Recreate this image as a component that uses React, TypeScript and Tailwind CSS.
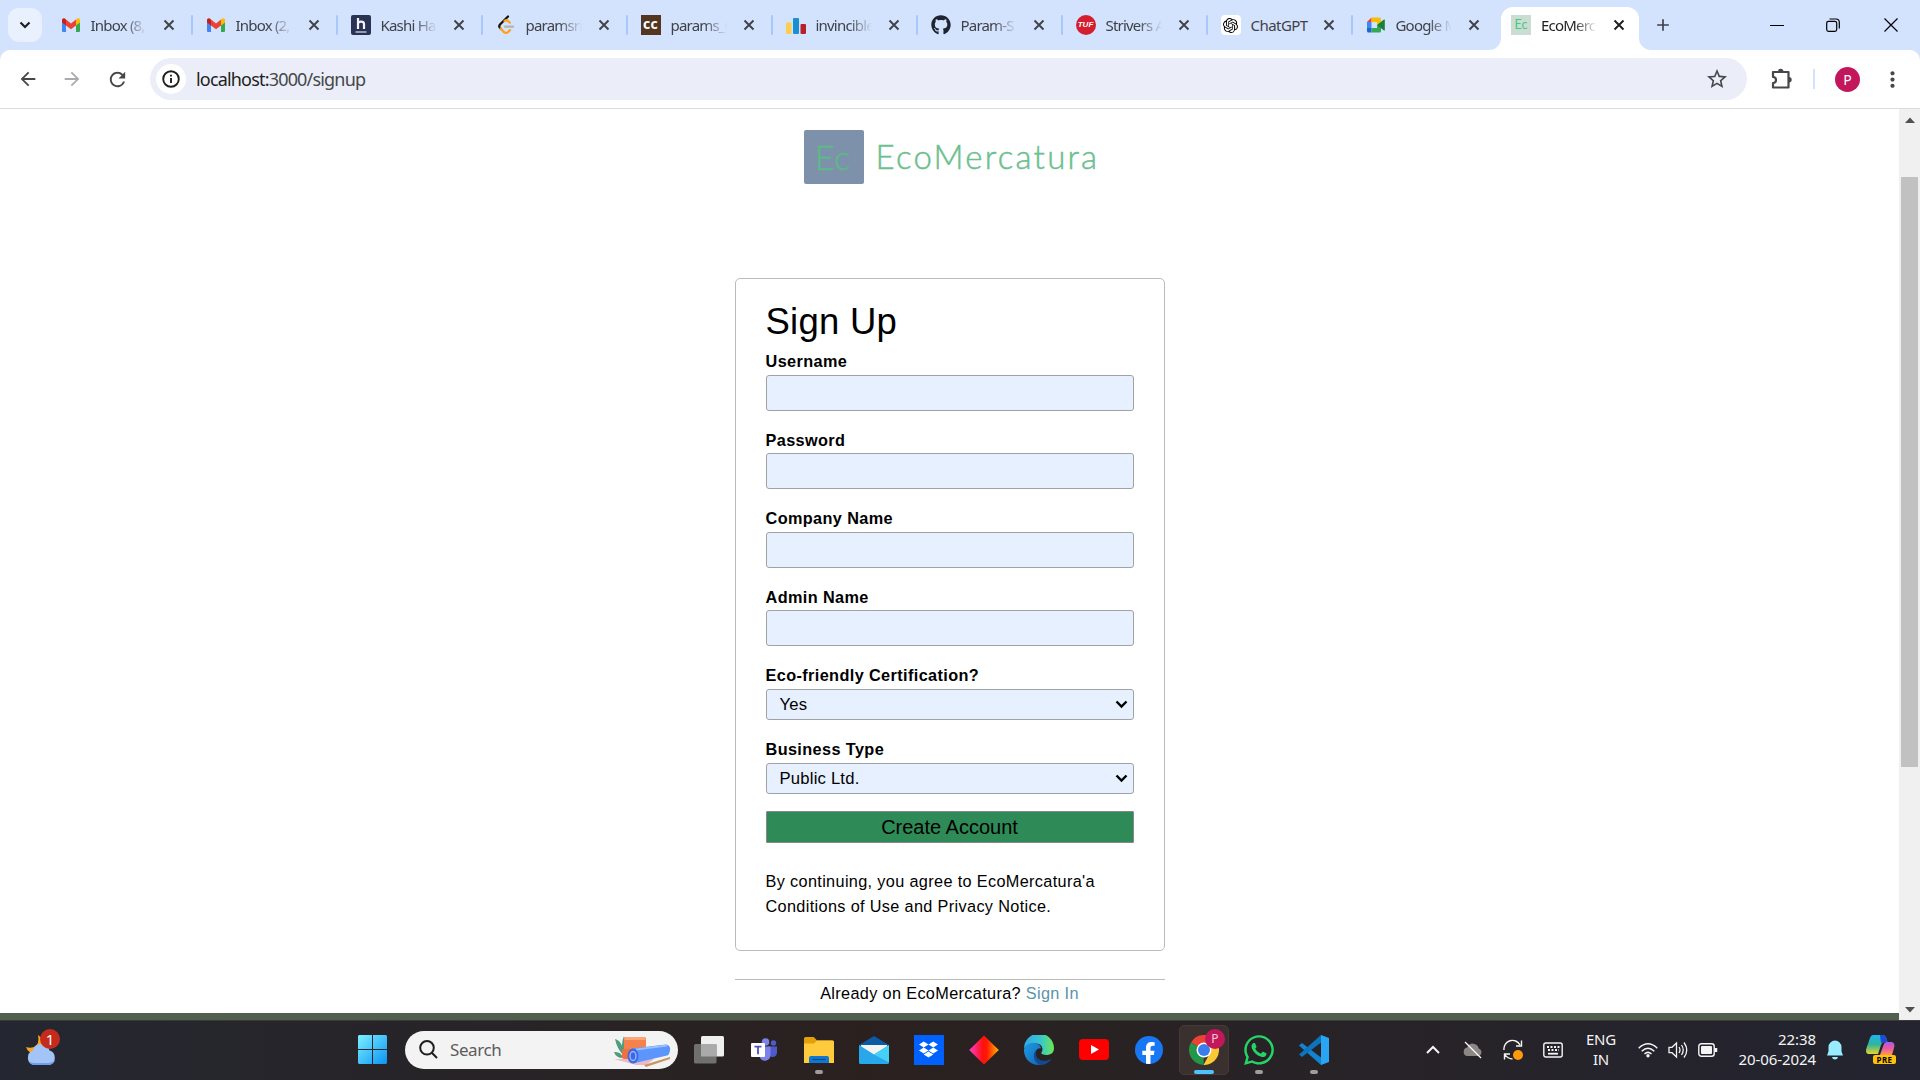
import React from "react";
import { FaGithub, FaDropbox, FaWhatsapp, FaFacebookF } from "react-icons/fa";
import { SiOpenai } from "react-icons/si";
import { MdArrowBack, MdArrowForward, MdRefresh, MdStarBorder, MdMoreVert, MdAdd } from "react-icons/md";

type Kids = { children?: React.ReactNode };

const Gmail = () => (
  <svg viewBox="0 0 20 20" className="size-5">
    <path d="M1 5v11a1 1 0 0 0 1 1h3V8z" fill="#4285f4" />
    <path d="M19 5v11a1 1 0 0 1-1 1h-3V8z" fill="#34a853" />
    <path d="M15 4.6l1.2-1C17.400 2.700 19 3.500 19 5v2.500l-4 3z" fill="#fbbc04" />
    <path d="M5 4.600l5 3.800 5-3.800v5.900l-5 3.800-5-3.800z" fill="#ea4335" />
    <path d="M1 5c0-1.500 1.600-2.300 2.800-1.400L5 4.600v5.900l-4-3z" fill="#c5221f" />
  </svg>
);

const Hashed = () => (
  <svg viewBox="0 0 20 20" className="size-5">
    <rect width="20" height="20" rx="2" fill="#2a3354" />
    <path d="M7 3v11M7 9q0-2.300 3-2.300T13 9v5" stroke="#f3f3fa" strokeWidth="2.200" fill="none" />
    <path d="M4.500 17h11" stroke="#dfe2ee" strokeWidth="1.200" />
  </svg>
);

const Leet = () => (
  <svg viewBox="0 0 20 20" className="size-5" fill="none" strokeLinecap="round" strokeWidth="2.200">
    <path d="M12 1.500L4 9.500q-1.500 1.700 0 3.500l1 1" stroke="#111" />
    <path d="M4.500 13.500l3.500 3.600q2 1.600 4 0l2-2M8.500 6q2-1.500 3.500 0l1.800 1.700" stroke="#ffa116" />
    <path d="M9 11.700h8" stroke="#b3b3b3" />
  </svg>
);

const Chef = () => (
  <span className="flex size-5 items-center justify-center bg-[#53361f] font-['Open_Sans',sans-serif] text-[14px] leading-none font-bold text-white">
    <span className="-mt-[3px] tracking-[0.300px]">cc</span>
  </span>
);

const Bars = () => (
  <svg viewBox="0 0 20 20" className="size-5">
    <rect x="0" y="7.500" width="5.500" height="11.500" rx="1" fill="#fccf4a" />
    <rect x="7" y="3" width="6" height="16" rx="1" fill="#1a90d0" />
    <rect x="14.500" y="9" width="5.500" height="10" rx="1" fill="#b71f2d" />
  </svg>
);

const Tuf = () => (
  <span className="flex size-5 items-center justify-center rounded-full bg-[#d41d2e] font-['Liberation_Sans',sans-serif] text-[8px] font-bold text-white italic">TUF</span>
);

const Gpt = () => (
  <span className="flex size-5 items-center justify-center rounded-[4px] bg-white text-[15px] text-black">
    <SiOpenai />
  </span>
);

const Meet = () => (
  <svg viewBox="0 0 20 20" className="size-5">
    <path d="M5.500 2.500V7H1z" fill="#ea4335" />
    <path d="M5.500 2.500h8A1.500 1.500 0 0 1 15 4v4l-4 2V7H5.500z" fill="#fbbc04" />
    <path d="M1 7h4.500v6H1z" fill="#4285f4" />
    <path d="M1 13h4.500v4.500h-3A1.500 1.500 0 0 1 1 16z" fill="#1967d2" />
    <path d="M5.500 13H11v-3l4 2v4a1.500 1.500 0 0 1-1.500 1.500h-8z" fill="#34a853" />
    <path d="M11 10l7-5.500q.8-.3.800.5v10q0 .8-.8.500z" fill="#188038" />
  </svg>
);

const EcoIcon = () => (
  <span className="flex size-5 items-center justify-center bg-[#cbddd3] font-[Lato,sans-serif] text-[12.500px] leading-none text-[#45c981]">Ec</span>
);

const CloseX = () => (
  <svg viewBox="0 0 12 12" className="size-3" fill="none" stroke="currentColor" strokeWidth="1.900">
    <path d="M1.500 1.500l9 9M10.500 1.500l-9 9" />
  </svg>
);

function TabBody({ icon, title, full }: { icon: React.ReactNode; title: string; full?: boolean }) {
  return (
    <>
      {icon}
      {full ? (
        <span className="ml-[10px] w-[59px] shrink-0 text-[15px] tracking-[-0.550px] whitespace-nowrap">{title}</span>
      ) : (
        <span className="ml-[10px] w-[59px] shrink-0 mask-r-from-55% mask-r-to-95% text-[15px] tracking-[-0.800px] whitespace-nowrap">{title}</span>
      )}
      <span className="ml-[13px]"><CloseX /></span>
    </>
  );
}

const tabs: [React.ReactNode, string][] = [
  [<Gmail />, "Inbox (8,"],
  [<Gmail />, "Inbox (2,"],
  [<Hashed />, "Kashi Ha"],
  [<Leet />, "paramsri"],
  [<Chef />, "params_0"],
  [<Bars />, "invincible"],
  [<FaGithub className="size-5 text-[#1f2530]" />, "Param-S"],
  [<Tuf />, "Strivers A"],
  [<Gpt />, "ChatGPT"],
  [<Meet />, "Google M"],
];

function TabStrip() {
  return (
    <div className="flex h-[50px] bg-[#d3e2fd] font-['Noto_Sans',sans-serif] text-[#3f4247]">
      <div className="mt-2 ml-2 flex h-[34px] w-[34px] items-center justify-center rounded-[11px] bg-[#eaf1fe] text-[#1f1f1f]">
        <svg viewBox="0 0 12 12" className="size-3" fill="none" stroke="currentColor" strokeWidth="2.200"><path d="M1.500 3.500L6 8l4.500-4.500" /></svg>
      </div>
      <div className="ml-[6px] flex">
        {tabs.map(([icon, title], i) => (
          <div key={i} className="flex h-[50px] w-[145px] items-center pl-[12.500px]">
            <TabBody icon={icon} title={title} full={i === 8} />
            {i < 9 && <span className="ml-auto h-5 w-[2px] rounded bg-[#a8c7fa]" />}
          </div>
        ))}
        <div className="relative mt-[7px] ml-[3px] flex h-[43px] w-[138px] items-center rounded-t-[12px] bg-white pb-[7px] pl-[10px] text-[#1f1f1f]">
          <span className="absolute bottom-0 -left-3 size-3 bg-white"><span className="block size-3 rounded-br-[12px] bg-[#d3e2fd]" /></span>
          <span className="absolute -right-3 bottom-0 size-3 bg-white"><span className="block size-3 rounded-bl-[12px] bg-[#d3e2fd]" /></span>
          <TabBody icon={<EcoIcon />} title="EcoMerc" />
        </div>
      </div>
      <MdAdd className="mt-[15px] ml-[14px] size-5" />
      <div className="ml-auto flex items-center text-black">
        <svg viewBox="0 0 14 14" className="size-[14px]" stroke="currentColor"><path d="M0 7.500h14" /></svg>
        <svg viewBox="0 0 14 14" className="ml-[42px] size-[14px]" fill="none" stroke="currentColor" strokeWidth="1.200"><rect x=".7" y="3.300" width="10" height="10" rx="1.800" /><path d="M3.500 1h6.500q3.300 0 3.300 3.300V10.500" /></svg>
        <svg viewBox="0 0 14 14" className="mr-[22px] ml-[44px] size-[14px]" stroke="currentColor" strokeWidth="1.200"><path d="M.5.5l13 13M13.500.5l-13 13" /></svg>
      </div>
    </div>
  );
}

function Toolbar() {
  return (
    <div className="bg-[#d3e2fd]">
      <div className="flex h-[59px] items-center rounded-t-[10px] border-b border-[#dadce0] bg-white font-['Noto_Sans',sans-serif] text-[#45474a]">
        <MdArrowBack className="ml-[17px] size-[22px]" />
        <MdArrowForward className="ml-[22px] size-[22px] text-[#a9abae]" />
        <MdRefresh className="ml-[23px] size-[23px]" />
        <div className="ml-[21px] flex h-[42px] w-[1597px] items-center rounded-full bg-[#ebeef8] pr-[18px] pl-[6px]">
          <span className="flex size-[30px] items-center justify-center rounded-full bg-white text-[#1f1f1f]">
            <svg viewBox="0 0 18 18" className="size-[18px]" fill="none" stroke="currentColor" strokeWidth="1.900"><circle cx="9" cy="9" r="7.800" /><path d="M9 8v5M9 4.800v1.800" /></svg>
          </span>
          <span className="ml-[10px] text-[18px] tracking-[-0.820px] text-[#1f1f1f]">localhost:<span className="text-[#45474a]">3000/signup</span></span>
          <MdStarBorder className="ml-auto size-[24px]" />
        </div>
        <svg viewBox="0 0 22 22" className="ml-[24px] size-[22px]" fill="none" stroke="currentColor" strokeWidth="2.200">
          <path d="M2 4h15.500v15.500H2V15q3 0 3-3t-3-3z" strokeLinejoin="round" />
          <path d="M7 3.500a2.700 2.700 0 0 1 5.400 0zM18 9a2.700 2.700 0 0 1 0 5.400z" fill="currentColor" stroke="none" />
        </svg>
        <span className="ml-[20px] h-5 w-[2px] bg-[#d3e2fd]" />
        <span className="ml-[20px] flex size-[25px] items-center justify-center rounded-full bg-[#c2185b] text-[14px] text-white">P</span>
        <MdMoreVert className="ml-[20px] size-[25px]" />
      </div>
    </div>
  );
}

const Label = ({ children }: Kids) => <label className="mb-[2px] block h-6 pt-[0.400px] text-[16.250px] leading-6 font-bold tracking-[0.390px]">{children}</label>;

const TextField = ({ label }: { label: string }) => (
  <div className="mb-[16.500px]">
    <Label>{label}</Label>
    <div className="h-9 rounded-[3px] border border-[#a0a2a6] bg-[#e6f0ff]" />
  </div>
);

const SelectField = ({ label, value }: { label: string; value: string }) => (
  <div className="mb-[17px]">
    <Label>{label}</Label>
    <div className="flex h-[31px] items-center justify-between rounded-[3px] border border-[#a0a2a6] bg-[#e6f0ff] pr-[5px] pl-[13px] text-[16.670px] tracking-[0.200px]">
      <span>{value}</span>
      <svg viewBox="0 0 13 10" className="h-[10px] w-[13px]" fill="none" stroke="#000" strokeWidth="2.400"><path d="M1.500 2.500l5 5 5-5" /></svg>
    </div>
  </div>
);

function Page() {
  return (
    <div className="flex h-[911px] font-['Liberation_Sans',Arial,sans-serif] text-black">
      <main className="flex w-[1899px] flex-col items-center bg-white pt-[20px]">
        <div className="flex h-[55px] w-[430px] items-center pl-[69px] font-[Lato,sans-serif] leading-none">
          <div className="flex h-[54px] w-[60px] items-center justify-center rounded-[2px] bg-[#7d91aa] text-[34px] tracking-[0.500px] text-[#5cb98a]"><span className="-ml-[1px] font-light [-webkit-text-stroke:0.5px_#5cb98a]">Ec</span></div>
          <div className="ml-[12px] text-[33px] font-light tracking-[2.250px] text-[#6cc08f] [-webkit-text-stroke:0.5px_#6cc08f]">EcoMercatura</div>
        </div>
        <section className="mt-[94px] h-[673px] w-[430px] rounded-[5px] border border-[#bbb] px-[30px]">
          <h1 className="mt-[21.900px] h-[48px] text-[36.500px] leading-[42px] tracking-[0.250px]">Sign Up</h1>
          <TextField label="Username" />
          <TextField label="Password" />
          <TextField label="Company Name" />
          <TextField label="Admin Name" />
          <SelectField label="Eco-friendly Certification?" value="Yes" />
          <SelectField label="Business Type" value="Public Ltd." />
          <button className="block h-8 w-full rounded-[1px] border border-[#888] bg-[#2e8b57] text-[20px] leading-[30px]">Create Account</button>
          <p className="mt-[26px] text-[16.250px] leading-[25px] tracking-[0.350px]">By continuing, you agree to EcoMercatura'a Conditions of Use and Privacy Notice.</p>
        </section>
        <p className="mt-[28px] h-[34px] w-[430px] border-t border-[#bbb] text-center text-[16.250px] leading-[26px] tracking-[0.350px]">
          Already on EcoMercatura? <a className="text-[#5a93a9]">Sign In</a>
        </p>
        <footer className="h-[7px] w-full bg-[#515f4e]" />
      </main>
      <aside className="flex w-[21px] flex-col items-center bg-[#f0f0f0] pt-[8px] pb-[7px]">
        <svg viewBox="0 0 10 6" className="h-[6px] w-[10px]"><path d="M0 6l5-5.500L10 6z" fill="#505050" /></svg>
        <div className="mt-[54px] h-[590px] w-[17px] bg-[#c1c1c1]" />
        <svg viewBox="0 0 10 6" className="mt-auto h-[6px] w-[10px]"><path d="M0 0l5 5.500L10 0z" fill="#505050" /></svg>
      </aside>
    </div>
  );
}

const Slot = ({ children, dot }: Kids & { dot?: boolean }) => (
  <div className="relative flex h-[60px] w-[55px] items-center justify-center">
    {children}
    {dot && <span className="absolute bottom-[6px] h-1 w-2 rounded-full bg-[#a09c9a]" />}
  </div>
);

const Weather = () => (
  <div className="relative ml-[25px] w-[38px]">
    <svg viewBox="0 0 36 38" className="-mt-[3px] h-[38px] w-9">
      <path d="M13 6q2 9-4 12-4 1.500-8 0 2 6 9 7l10-7q-1-8-7-12z" fill="#f6a623" />
      <path d="M9 36a7.500 7.500 0 0 1-1-14.500 8.500 8.500 0 0 1 16.500 0A7.500 7.500 0 0 1 24 36z" fill="#a3c4f7" />
      <path d="M3 31q3 5 6 5h15q5-1 6-5-3 3-6 3H9q-4 0-6-3z" fill="#6f9cec" />
    </svg>
    <span className="absolute -top-[3px] left-[15px] flex size-5 items-center justify-center rounded-full bg-[#c42b1c] text-[15px] text-white">1</span>
  </div>
);

const SearchArt = () => (
  <svg viewBox="0 0 58 34" className="h-[34px] w-[58px]">
    <path d="M0 26h40l-8 6H22z" fill="#e9b9c6" />
    <path d="M1 6q8 2 9 17Q3 16 1 6zM10 3q2 8 0 17-4-8 0-17zM0 19q7-1 9 6-7 0-9-6z" fill="#4f9d7c" />
    <rect x="10" y="4" width="22" height="13" rx="2" fill="#f5814f" />
    <path d="M12 4h18l2 3H10z" fill="#ffa576" />
    <rect x="8" y="16" width="14" height="10" rx="2" fill="#f0703f" />
    <path d="M30 32l26-8v2l-24 8z" fill="#c99563" />
    <path d="M18 15.500l34-4q5 1 4 6t-3 5l-34 8z" fill="#5c95fb" />
    <path d="M22 16.500l31-4" stroke="#96c0ff" strokeWidth="2" />
    <ellipse cx="19" cy="23" rx="5.500" ry="7.500" fill="#3e68e0" />
    <ellipse cx="19" cy="23" rx="3" ry="4.500" fill="none" stroke="#9db9ff" strokeWidth="1.300" />
  </svg>
);

function Apps() {
  return (
    <>
      <Slot>
        <svg viewBox="0 0 30 28" className="h-7 w-[30px]">
          <rect x="7" y="0" width="23" height="20.500" rx="1.500" fill="#efefef" />
          <rect x="0" y="8" width="22.500" height="19.500" rx="1.500" fill="#707070" />
          <path d="M7 8h15.500v12.500H7z" fill="#aaa" />
        </svg>
      </Slot>
      <Slot>
        <svg viewBox="0 0 26 24" className="h-6 w-[26px]">
          <circle cx="22.500" cy="5" r="2.700" fill="#5059c9" />
          <circle cx="14.500" cy="4" r="3.800" fill="#7b83eb" />
          <path d="M17 8.500h9V15q-1 4.500-5 4-3-.5-4-3z" fill="#5059c9" />
          <path d="M9 8.500h10.500V17a5.700 5.700 0 0 1-10.500 3z" fill="#7b83eb" />
          <rect y="5" width="14" height="14" rx="1" fill="#fff" />
          <path d="M3.500 8.700h7M7 8.700v7.500" stroke="#4b53bc" strokeWidth="1.800" />
        </svg>
      </Slot>
      <Slot dot>
        <svg viewBox="0 0 30 26" className="h-[26px] w-[30px]">
          <path d="M0 1.500Q0 0 1.500 0H9q1 0 2 1.300L13 3.500h15.500Q30 3.500 30 5v5H0z" fill="#e3a008" />
          <path d="M0 6.500h10L13 3.500h15.500Q30 3.500 30 5v21H0z" fill="#ffcb3d" />
          <path d="M5 26v-5q0-2 2-2h16q2 0 2 2v5z" fill="#0f78d4" />
          <path d="M8.500 22.500h13" stroke="#084a86" strokeWidth="1.200" />
        </svg>
      </Slot>
      <Slot>
        <svg viewBox="0 0 30 28" className="h-7 w-[30px]">
          <path d="M0 9L15 0l15 9v4H0z" fill="#0c59a4" />
          <path d="M2 9h26v10H2z" fill="#f3f3f3" />
          <path d="M0 9l15 9.500L30 9v17.500q0 1.500-1.500 1.500h-27Q0 28 0 26.500z" fill="#28a8ea" />
          <path d="M30 9v17.500L15 18.500z" fill="#45d0f5" />
        </svg>
      </Slot>
      <Slot>
        <span className="flex size-[30px] items-center justify-center bg-[#0061fe] text-[19px] text-white"><FaDropbox /></span>
      </Slot>
      <Slot>
        <svg viewBox="0 0 30 30" className="size-[30px]">
          <defs><linearGradient id="dia"><stop offset="0" stopColor="#ff3fd0" /><stop offset=".45" stopColor="#ff1010" /><stop offset=".6" stopColor="#ff1a00" /><stop offset="1" stopColor="#ffb800" /></linearGradient></defs>
          <path d="M15 0.500l14.800 14.500L15 29.500.200 15z" fill="url(#dia)" />
        </svg>
      </Slot>
      <Slot>
        <svg viewBox="0 0 30 30" className="size-[30px]">
          <defs>
            <linearGradient id="e1" x1="0" x2="1"><stop offset="0" stopColor="#2fa8e8" /><stop offset=".55" stopColor="#37c6d0" /><stop offset="1" stopColor="#6be84f" /></linearGradient>
            <linearGradient id="e2" x1="0" x2="1" y1="0" y2="1"><stop offset="0" stopColor="#1d9de0" /><stop offset="1" stopColor="#1461b8" /></linearGradient>
          </defs>
          <path d="M0 14A15 15 0 0 1 30 13c0 5-3.500 7-7.500 7-4 0-6-1.200-5-2.600 2-2.400 1.300-8.400-5-8.900C6 8 1 11 0 14z" fill="url(#e1)" />
          <path d="M0 14.500C1 10.500 6 7 11 8c4.500.8 6 4 6 5.500-3-1-6.500 2.500-6.500 6.500 0 5 4 8.500 8 9.300C10 32-.5 26 0 14.500z" fill="url(#e2)" />
          <path d="M13 14.800c-3 5 .5 10.700 6 11 4 .2 6.500-1 8.500-2.300C25.500 27.500 21 30 16.500 30 9 27.500 8 18 13 14.800z" fill="#124a92" />
        </svg>
      </Slot>
      <Slot>
        <svg viewBox="0 0 30 21" className="h-[21px] w-[30px]"><rect width="30" height="21" rx="4" fill="#f00" /><path d="M12 6l8 4.500-8 4.500z" fill="#fff" /></svg>
      </Slot>
      <Slot>
        <span className="flex size-7 items-end justify-center overflow-hidden rounded-full bg-[#1877f2] text-white"><FaFacebookF className="-mb-[1px] size-[23px]" /></span>
      </Slot>
      <div className="relative flex h-[60px] w-[55px] items-center justify-center">
        <span className="flex size-[50px] items-center justify-center rounded-[5px] border border-[#443b39] bg-[#3a302e]">
          <svg viewBox="0 0 30 30" className="size-[30px]">
            <path d="M15 15L2 7.500A15 15 0 0 1 28 7.500z" fill="#ea4335" />
            <path d="M15 15l-.5 15A15 15 0 0 1 2 7.500z" fill="#23964a" />
            <path d="M15 8h13.300A15 15 0 0 1 14.500 30L21 18z" fill="#fcc934" />
            <circle cx="15" cy="15" r="7.500" fill="#fff" /><circle cx="15" cy="15" r="6" fill="#3b7ded" />
          </svg>
        </span>
        <span className="absolute top-[9px] right-[6px] flex size-5 items-center justify-center rounded-full bg-[#c2185b] text-[12px] text-[#f3c6d8]">P</span>
        <span className="absolute bottom-[6px] h-1 w-5 rounded-full bg-[#4cc2ff]" />
      </div>
      <Slot dot><FaWhatsapp className="size-[34px] text-[#25d366]" /></Slot>
      <Slot dot>
        <svg viewBox="0 0 30 30" className="size-[30px]">
          <path d="M0 10.500L3 8l19 14.500V30z" fill="#1283cf" />
          <path d="M0 19.500L3 22 22 7.500V0z" fill="#0b74bd" />
          <path d="M22 0l8 3v24l-8 3z" fill="#2aa5f3" />
        </svg>
      </Slot>
    </>
  );
}

function Tray() {
  return (
    <div className="ml-auto flex items-center text-[#f4f4f4]">
      <svg viewBox="0 0 14 10" className="h-[10px] w-[14px]" fill="none" stroke="currentColor" strokeWidth="2"><path d="M1 8l6-6 6 6" /></svg>
      <svg viewBox="0 0 20 18" className="ml-[23px] h-[18px] w-5"><path d="M4.500 15a4.300 4.300 0 0 1-.3-8.500 6 6 0 0 1 11.500 1A3.900 3.900 0 0 1 15.500 15z" fill="#8b8786" /><path d="M2 1l16 16" stroke="#fff" strokeWidth="1.300" /></svg>
      <svg viewBox="0 0 20 22" className="ml-5 h-[22px] w-5" fill="none" stroke="currentColor" strokeWidth="1.400">
        <path d="M1 11A8.500 8.500 0 0 1 17 6M18.500 1.500V7H13M1.500 20.500V15H7M1.500 15q2.500 4.500 8 5" />
        <circle cx="15" cy="16" r="5" fill="#ff9a0a" stroke="none" />
      </svg>
      <svg viewBox="0 0 20 16" className="ml-5 h-4 w-5" fill="none" stroke="currentColor" strokeWidth="1.400">
        <rect x=".8" y="1" width="18.400" height="14" rx="2" /><path d="M4 5h12.500M5 8h11" strokeWidth="2" strokeDasharray="2 1.500" /><path d="M5 11.700h10" strokeWidth="1.800" />
      </svg>
      <div className="-mt-px ml-[17px] w-[42px] text-center text-[15px] leading-5 tracking-[-0.200px]">ENG<br />IN</div>
      <svg viewBox="0 0 20 16" className="ml-[16px] h-4 w-5" fill="none" stroke="currentColor" strokeWidth="1.500">
        <path d="M.7 6.200q9.300-8.800 18.600 0M3.700 9.200q6.300-6 12.600 0M6.500 12q3.500-3.200 7 0" /><circle cx="10" cy="13.800" r="1.700" fill="currentColor" stroke="none" />
      </svg>
      <svg viewBox="0 0 20 18" className="ml-[10px] h-[18px] w-5" fill="none" stroke="currentColor" strokeWidth="1.300">
        <path d="M1 6.300h3L8.500 2v14L4 11.700H1zM11 6q2 3 0 6M13.500 4q3.500 5 0 10M16 1.500q5.500 7.500 0 15" />
      </svg>
      <svg viewBox="0 0 20 14" className="ml-[10px] h-[14px] w-5" fill="none" stroke="currentColor" strokeWidth="1.400">
        <rect x=".8" y=".8" width="15.400" height="12.400" rx="2.500" /><rect x="3" y="3" width="11" height="8" rx="1" fill="currentColor" stroke="none" /><path d="M18 5v4" strokeWidth="2.500" />
      </svg>
      <div className="-mt-[2px] ml-[18px] w-[80px] text-right text-[15px] leading-5 tracking-[-0.080px] whitespace-nowrap">22:38<br />20-06-2024</div>
      <svg viewBox="0 0 16 20" className="ml-[11px] h-5 w-4" fill="#99ebff"><path d="M0 15.500l1.500-4V7a6.500 6.500 0 0 1 13 0v4.500l1.500 4zM5 17h6q-.5 2.500-3 2.500T5 17z" /></svg>
      <div className="relative mr-[25px] ml-[23px] h-[29px] w-[29px]">
        <svg viewBox="0 0 29 29" className="size-[29px]">
          <defs>
            <linearGradient id="c1" x1="0" x2="0" y1="0" y2="1"><stop offset="0" stopColor="#1fb4f5" /><stop offset=".5" stopColor="#2fb59b" /><stop offset="1" stopColor="#e6d52c" /></linearGradient>
            <linearGradient id="c2" x1="0" x2="0" y1="0" y2="1"><stop offset="0" stopColor="#a65bf0" /><stop offset=".5" stopColor="#ec5aa0" /><stop offset="1" stopColor="#ff9a4d" /></linearGradient>
          </defs>
          <path d="M7 0h10q3 0 4.500 7H18q-2 0-3 3l-3 9H2q-3-1-1.500-6L4 3q1-3 3-3z" fill="url(#c1)" />
          <path d="M14 0h3q3 0 4.500 7H18q-2 0-3 1z" fill="#1b4bd8" />
          <path d="M20 7h6q3.500 1 2 6l-2 7H14l3.500-10q1-3 2.500-3z" fill="url(#c2)" />
        </svg>
        <span className="absolute -right-[1px] bottom-0 flex h-[9px] w-[23px] items-center justify-center rounded-[2px] bg-[#ffc20a] text-[8px] leading-none font-bold tracking-[0.400px] text-black">PRE</span>
      </div>
    </div>
  );
}

function Taskbar() {
  return (
    <div className="flex h-[60px] items-center border-t border-[#3d3937] bg-linear-to-r from-[#242731] via-[#2a211f] via-45% to-[#232430] pb-[2px] font-['Noto_Sans',sans-serif]">
      <Weather />
      <svg viewBox="0 0 29 29" className="ml-[295px] size-[29px]">
        <defs><linearGradient id="w" x1="0" y1="0" x2="1" y2="1"><stop offset="0" stopColor="#7df0ff" /><stop offset="1" stopColor="#0a93f5" /></linearGradient></defs>
        <path d="M1 0h13v14H0V1zM15 0h13l1 1v13H15zM0 15h14v14H1l-1-1zM15 15h14v13l-1 1H15z" fill="url(#w)" />
      </svg>
      <div className="ml-[18px] flex h-[38px] w-[273px] items-center rounded-full bg-[#f3f3f3] pl-[14px]">
        <svg viewBox="0 0 19 19" className="size-[19px]" fill="none" stroke="#1e1e1e" strokeWidth="2"><circle cx="8" cy="7.800" r="6.800" /><path d="M12.800 12.800l5.200 5.200" /></svg>
        <span className="ml-[12px] text-[17px] tracking-[-0.400px] text-[#5c5c5c]">Search</span>
        <span className="ml-auto pr-[6px]"><SearchArt /></span>
      </div>
      <div className="ml-[3px] flex"><Apps /></div>
      <Tray />
    </div>
  );
}

export default function App() {
  return (
    <div className="h-[1080px] w-[1920px] overflow-hidden">
      <TabStrip />
      <Toolbar />
      <Page />
      <Taskbar />
    </div>
  );
}
